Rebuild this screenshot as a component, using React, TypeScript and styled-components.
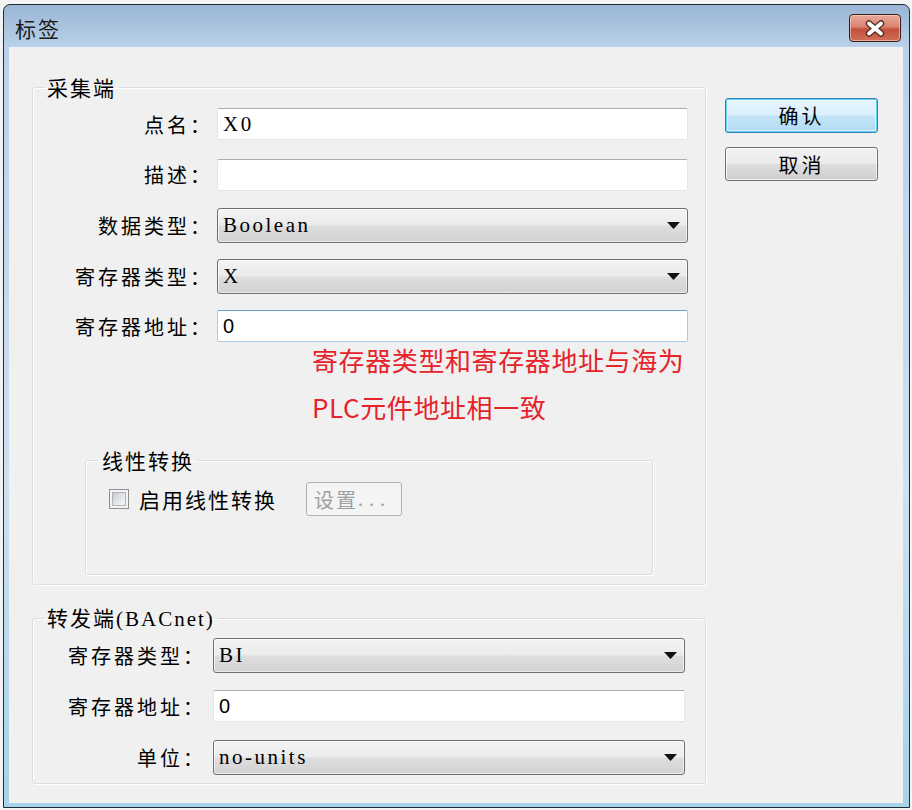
import React from "react";
import styled, { createGlobalStyle } from "styled-components";

const GlobalStyle = createGlobalStyle`
  html, body { margin: 0; padding: 0; background: #f3f3f3; }
  * { box-sizing: border-box; }
`;

const CJK = `"Noto Sans CJK SC", "Noto Sans", sans-serif`;
const LATIN = `"Liberation Serif", "DejaVu Serif", serif`;

const Page = styled.div`
  padding: 4px 2px 2px 3px;
  font-family: ${CJK};
  color: #000;
`;

const Window = styled.div`
  width: 907px;
  height: 804px;
  border: 1px solid #1d2c36;
  border-radius: 7px 7px 0 0;
  background: linear-gradient(
    to bottom,
    #9ab6d5 0px,
    #b9d1ea 42px,
    #cfe0f0 60%,
    #a5d3e8 100%
  );
  padding: 0 6px 4px 5px;
  display: flex;
  flex-direction: column;
`;

const TitleBar = styled.div`
  height: 42px;
  display: flex;
  align-items: flex-start;
  justify-content: space-between;
`;

const Title = styled.span`
  margin: 11px 0 0 6px;
  font-size: 21px;
  line-height: 24px;
  letter-spacing: 2px;
  color: #1b1b1b;
`;

const CloseButton = styled.div`
  margin: 9px 2px 0 0;
  width: 52px;
  height: 28px;
  border: 1px solid #3a1d18;
  border-radius: 4px;
  background: linear-gradient(
    to bottom,
    #e9a99a 0%,
    #d98470 45%,
    #c2503c 55%,
    #d0705a 100%
  );
  box-shadow: inset 0 0 0 1px rgba(255, 220, 210, 0.55);
  display: flex;
  align-items: center;
  justify-content: center;
`;

const Body = styled.div`
  flex: 1;
  background: #f0f0f0;
  display: flex;
  align-items: flex-start;
  gap: 19px;
  padding: 28px 0 0 23px;
`;

const LeftCol = styled.div`
  width: 674px;
  display: flex;
  flex-direction: column;
  gap: 20px;
`;

const Group = styled.fieldset<{ $pr: number; $pb: number }>`
  margin: 0;
  min-width: 0;
  padding: 0 ${(p) => p.$pr}px ${(p) => p.$pb}px 0;
  border: 1px solid #d5dfe5;
  border-radius: 3px;
  box-shadow: inset 1px 1px 0 #fff, 1px 1px 0 #fff;
`;

const Legend = styled.legend<{ $ml: number }>`
  margin-left: ${(p) => p.$ml}px;
  padding: 0 3px;
  font-size: 21px;
  line-height: 24px;
  letter-spacing: 2px;
  color: #000;
`;

const Latin = styled.span<{ $ls: number }>`
  font-family: ${LATIN};
  letter-spacing: ${(p) => p.$ls}px;
`;

const Rows = styled.div<{ $pt: number; $gap: number }>`
  display: flex;
  flex-direction: column;
  padding-top: ${(p) => p.$pt}px;
  gap: ${(p) => p.$gap}px;
`;

const FieldRow = styled.div<{ $labelWidth: number; $gap: number }>`
  display: grid;
  grid-template-columns: ${(p) => p.$labelWidth}px 1fr;
  column-gap: ${(p) => p.$gap}px;
  align-items: center;
  height: 34px;
`;

const Label = styled.label`
  text-align: right;
  font-size: 20px;
  letter-spacing: 3px;
  white-space: nowrap;
  color: #000;
`;

const TextInput = styled.input<{ $focused?: boolean; $sans?: boolean }>`
  height: 32px;
  width: 100%;
  margin: 0;
  padding: 0 0 0 5px;
  background: #fff;
  border: 1px solid ${(p) => (p.$focused ? "#a9c9e6" : "#e1e6ec")};
  border-top-color: ${(p) => (p.$focused ? "#6f9fcb" : "#abadb3")};
  border-radius: 2px;
  font-family: ${(p) => (p.$sans ? `"Liberation Sans", Arial, sans-serif` : LATIN)};
  font-size: ${(p) => (p.$sans ? "20px" : "21px")};
  letter-spacing: ${(p) => (p.$sans ? "0" : "2.5px")};
  color: #000;
  outline: none;
`;

const Combo = styled.div`
  height: 35px;
  display: flex;
  align-items: center;
  justify-content: space-between;
  padding: 0 7px 0 5px;
  border: 1px solid #707070;
  border-radius: 3px;
  background: linear-gradient(
    to bottom,
    #f3f3f3 0%,
    #ebebeb 48%,
    #dedede 52%,
    #d2d2d2 100%
  );
  box-shadow: inset 0 0 0 1px rgba(255, 255, 255, 0.6);
  font-family: ${LATIN};
  font-size: 21px;
  letter-spacing: 2.5px;
  color: #000;
`;

const Note = styled.div`
  margin: 2px 0 0 279px;
  display: flex;
  flex-direction: column;
  gap: 17px;
  color: #e6222b;
  font-size: 26px;
  line-height: 30px;
  letter-spacing: 0.6px;
  white-space: nowrap;
`;

const SubGroup = styled.fieldset`
  margin: 26px 35px 0 52px;
  min-width: 0;
  padding: 0;
  border: 1px solid #d5dfe5;
  border-radius: 3px;
  box-shadow: inset 1px 1px 0 #fff, 1px 1px 0 #fff;
`;

const SubBody = styled.div`
  height: 102px;
  padding: 10px 0 0 23px;
`;

const CheckRow = styled.div`
  height: 34px;
  display: flex;
  align-items: center;
`;

const CheckBox = styled.span`
  width: 20px;
  height: 20px;
  border: 1px solid #8e8f8f;
  background: #f4f4f4;
  padding: 2px;
  display: flex;
`;

const CheckInner = styled.span`
  flex: 1;
  border: 1px solid #b0b4b9;
  background: linear-gradient(135deg, #c6cad0 0%, #e3e5e8 55%, #f8f8f8 100%);
`;

const CheckLabel = styled.span`
  margin-left: 10px;
  font-size: 21px;
  letter-spacing: 2px;
  white-space: nowrap;
`;

const SetButton = styled.div`
  margin-left: 29px;
  width: 96px;
  height: 34px;
  border: 1px solid #adb2b5;
  border-radius: 3px;
  background: #f4f4f4;
  color: #a0a0a0;
  display: flex;
  align-items: center;
  padding-left: 7px;
  font-size: 20px;
  letter-spacing: 2px;
  white-space: nowrap;
`;

const ButtonCol = styled.div`
  margin-top: 23px;
  width: 153px;
  display: flex;
  flex-direction: column;
  gap: 14px;
`;

const DialogButton = styled.div<{ $primary?: boolean }>`
  height: ${(p) => (p.$primary ? 35 : 34)}px;
  display: flex;
  align-items: center;
  justify-content: center;
  border-radius: 3px;
  font-size: 20px;
  letter-spacing: 3px;
  color: #000;
  border: 1px solid ${(p) => (p.$primary ? "#3c7fb1" : "#707070")};
  background: ${(p) =>
    p.$primary
      ? "linear-gradient(to bottom, #e6f5fc 0%, #d9f0fc 48%, #c4e5f7 52%, #b1dbf3 100%)"
      : "linear-gradient(to bottom, #f2f2f2 0%, #ebebeb 48%, #dddddd 52%, #cfcfcf 100%)"};
  box-shadow: ${(p) =>
    p.$primary
      ? "inset 0 0 0 1px #5fd2f5, inset 0 0 0 2px rgba(255,255,255,0.5)"
      : "inset 0 0 0 1px rgba(255,255,255,0.7)"};
`;

const Arrow = () => (
  <svg width="13" height="7" viewBox="0 0 13 7">
    <polygon points="0,0 13,0 6.5,7" fill="#111" />
  </svg>
);

const CloseGlyph = () => (
  <svg width="22" height="17" viewBox="0 0 22 17">
    <path d="M5 3.5 L17 13.5 M17 3.5 L5 13.5" stroke="#5a2a22" strokeWidth="6.5" strokeLinecap="round" />
    <path d="M5 3.5 L17 13.5 M17 3.5 L5 13.5" stroke="#ffffff" strokeWidth="3.8" strokeLinecap="round" />
  </svg>
);

export default function App() {
  return (
    <Page>
      <GlobalStyle />
      <Window>
        <TitleBar>
          <Title>标签</Title>
          <CloseButton>
            <CloseGlyph />
          </CloseButton>
        </TitleBar>
        <Body>
          <LeftCol>
            <Group $pr={17} $pb={9}>
              <Legend $ml={11}>采集端</Legend>
              <Rows $pt={8} $gap={16.5}>
                <FieldRow $labelWidth={180} $gap={4}>
                  <Label>点名：</Label>
                  <TextInput readOnly value="X0" />
                </FieldRow>
                <FieldRow $labelWidth={180} $gap={4}>
                  <Label>描述：</Label>
                  <TextInput readOnly value="" />
                </FieldRow>
                <FieldRow $labelWidth={180} $gap={4}>
                  <Label>数据类型：</Label>
                  <Combo>
                    <span>Boolean</span>
                    <Arrow />
                  </Combo>
                </FieldRow>
                <FieldRow $labelWidth={180} $gap={4}>
                  <Label>寄存器类型：</Label>
                  <Combo>
                    <span>X</span>
                    <Arrow />
                  </Combo>
                </FieldRow>
                <FieldRow $labelWidth={180} $gap={4}>
                  <Label>寄存器地址：</Label>
                  <TextInput readOnly value="0" $focused $sans />
                </FieldRow>
              </Rows>
              <Note>
                <span>寄存器类型和寄存器地址与海为</span>
                <span>PLC元件地址相一致</span>
              </Note>
              <SubGroup>
                <Legend $ml={13}>线性转换</Legend>
                <SubBody>
                  <CheckRow>
                    <CheckBox>
                      <CheckInner />
                    </CheckBox>
                    <CheckLabel>启用线性转换</CheckLabel>
                    <SetButton>
                      设置<Latin $ls={6}>...</Latin>
                    </SetButton>
                  </CheckRow>
                </SubBody>
              </SubGroup>
            </Group>
            <Group $pr={20} $pb={9}>
              <Legend $ml={11}>
                转发端<Latin $ls={2}>(BACnet)</Latin>
              </Legend>
              <Rows $pt={7} $gap={17}>
                <FieldRow $labelWidth={173} $gap={7}>
                  <Label>寄存器类型：</Label>
                  <Combo>
                    <span>BI</span>
                    <Arrow />
                  </Combo>
                </FieldRow>
                <FieldRow $labelWidth={173} $gap={7}>
                  <Label>寄存器地址：</Label>
                  <TextInput readOnly value="0" $sans />
                </FieldRow>
                <FieldRow $labelWidth={173} $gap={7}>
                  <Label>单位：</Label>
                  <Combo>
                    <span>no-units</span>
                    <Arrow />
                  </Combo>
                </FieldRow>
              </Rows>
            </Group>
          </LeftCol>
          <ButtonCol>
            <DialogButton $primary>确认</DialogButton>
            <DialogButton>取消</DialogButton>
          </ButtonCol>
        </Body>
      </Window>
    </Page>
  );
}
